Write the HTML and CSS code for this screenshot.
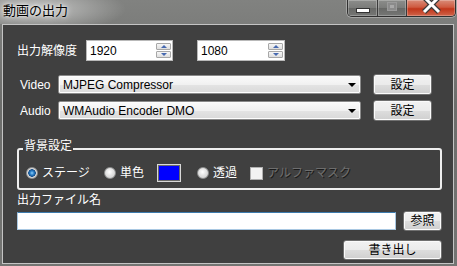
FILE: index.html
```html
<!DOCTYPE html>
<html lang="ja">
<head>
    <meta charset="UTF-8">
    <title>動画の出力</title>
    <link rel="stylesheet" href="styles.css">
</head>
<body>
    <div class="window">
        <div class="titlebar">
            <span class="title">動画の出力</span>
            <div class="caption-buttons">
                <span class="cap cap-min"><i></i></span>
                <span class="cap cap-max"><i></i></span>
                <span class="cap cap-close">
                    <svg width="21" height="14" viewBox="0 0 21 14">
                        <path d="M3 -3 L18 12 M18 -3 L3 12" stroke="#3a3a3a" stroke-width="5.5" fill="none"/>
                        <path d="M3 -3 L18 12 M18 -3 L3 12" stroke="#ffffff" stroke-width="3" fill="none"/>
                    </svg>
                </span>
            </div>
        </div>

        <div class="client">
            <div class="row res-row">
                <span class="res-label">出力解像度</span>
                <div class="spin">
                    <span>1920</span>
                    <span class="spin-btns"><span class="spin-up"></span><span class="spin-down"></span></span>
                </div>
                <div class="spin spin-height">
                    <span>1080</span>
                    <span class="spin-btns"><span class="spin-up"></span><span class="spin-down"></span></span>
                </div>
            </div>

            <div class="row codec-row">
                <span class="codec-label">Video</span>
                <div class="combo"><span>MJPEG Compressor</span><span class="combo-arrow"></span></div>
                <button class="btn btn-setting">設定</button>
            </div>
            <div class="row codec-row codec-audio">
                <span class="codec-label">Audio</span>
                <div class="combo"><span>WMAudio Encoder DMO</span><span class="combo-arrow"></span></div>
                <button class="btn btn-setting">設定</button>
            </div>

            <fieldset class="group">
                <legend>背景設定</legend>
                <div class="bg-options">
                    <span class="opt opt-stage"><span class="radio checked"></span>ステージ</span>
                    <span class="opt opt-mono"><span class="radio"></span>単色</span>
                    <span class="swatch"></span>
                    <span class="opt opt-trans"><span class="radio"></span>透過</span>
                    <span class="opt opt-alpha"><span class="check"></span><span class="disabled">アルファマスク</span></span>
                </div>
            </fieldset>

            <div class="file-label">出力ファイル名</div>
            <div class="row file-row">
                <div class="file-input"></div>
                <button class="btn btn-browse">参照</button>
            </div>
            <div class="row export-row">
                <button class="btn btn-export">書き出し</button>
            </div>
        </div>
    </div>
</body>
</html>
```

FILE: styles.css
```css
body {
    margin: 0;
    font-family: "Liberation Sans", "Noto Sans CJK JP", sans-serif;
    font-size: 12px;
    line-height: 14px;
}
.window {
    width: 457px;
    height: 266px;
    display: flex;
    flex-direction: column;
    overflow: hidden;
    background: linear-gradient(180deg, #818280 0%, #6c6d6b 40%, #747573 100%);
}
.titlebar {
    height: 24px;
    flex: none;
    display: flex;
    align-items: flex-start;
    background: radial-gradient(ellipse 90px 24px at 36px 9px, rgba(255,255,255,0.55), rgba(255,255,255,0) 100%);
}
.title {
    padding: 2px 0 0 3px;
    font-family: "Noto Sans CJK JP", sans-serif;
    font-size: 13px;
    line-height: 15px;
    color: #000;
    text-shadow: 0 0 6px #fff, 0 0 3px rgba(255,255,255,0.8);
}
.caption-buttons {
    margin-left: auto;
    margin-right: 1px;
    display: flex;
    height: 16px;
    border: 1px solid #303030;
    border-top: none;
    border-radius: 0 0 5px 5px;
    overflow: hidden;
    box-shadow: 0 0 0 1px rgba(255,255,255,0.3);
}
.cap {
    display: flex;
    align-items: center;
    justify-content: center;
    box-shadow: inset 0 0 0 1px rgba(255,255,255,0.25);
}
.cap-min,
.cap-max {
    background: linear-gradient(180deg, #8c8d8b 0%, #7a7b79 50%, #676866 51%, #767775 100%);
    border-right: 1px solid #3a3a3a;
}
.cap-min {
    width: 29px;
}
.cap-min i {
    width: 12px;
    height: 3px;
    margin-top: 5px;
    background: #fff;
    border: 1px solid #333;
}
.cap-max {
    width: 28px;
}
.cap-max i {
    width: 8px;
    height: 7px;
    margin-top: -3px;
    border: 1px solid #9a9a9a;
    background: #a9a9a9;
    box-shadow: inset 0 0 0 2px #8b8b8b;
}
.cap-close {
    width: 48px;
    align-items: flex-start;
    background: linear-gradient(180deg, #d98c79 0%, #cf5a40 45%, #c1361a 55%, #d0644a 100%);
}
.client {
    flex: 1;
    margin: 0 3px 2px 2px;
    padding: 15px 11px 0 14px;
    background: #404040;
    border: 1px solid #c4c4c4;
    color: #fff;
}
.row {
    display: flex;
    align-items: center;
}
.res-row {
    height: 21px;
}
.res-label {
    width: 69px;
}
.spin {
    box-sizing: border-box;
    width: 87px;
    height: 21px;
    padding: 0 1px 0 3px;
    display: flex;
    align-items: center;
    background: #fff;
    border: 1px solid #b9b9b9;
    color: #000;
}
.spin-height {
    width: 88px;
    margin-left: 24px;
}
.spin-btns {
    margin-left: auto;
    width: 15px;
    height: 15px;
    display: flex;
    flex-direction: column;
    gap: 1px;
}
.spin-up,
.spin-down {
    flex: 1;
    display: flex;
    align-items: center;
    justify-content: center;
    border: 1px solid #a7a7a7;
    border-radius: 1px;
    background: linear-gradient(180deg, #f6f6f6, #dedede);
}
.spin-up::after,
.spin-down::after {
    content: "";
    border-left: 3px solid transparent;
    border-right: 3px solid transparent;
}
.spin-up::after {
    border-bottom: 3px solid #4669b0;
}
.spin-down::after {
    border-top: 3px solid #4669b0;
}
.codec-row {
    height: 21px;
    margin-top: 13px;
}
.codec-audio {
    margin-top: 5px;
}
.codec-label {
    width: 38px;
    padding-left: 3px;
}
.combo {
    box-sizing: border-box;
    width: 303px;
    height: 19px;
    padding: 0 4px;
    display: flex;
    align-items: center;
    border: 1px solid #8a8a8a;
    border-radius: 2px;
    background: linear-gradient(180deg, #fbfbfb 0%, #f1f1f1 50%, #e4e4e4 51%, #d9d9d9 100%);
    box-shadow: inset 0 0 0 1px #fdfdfd;
    color: #000;
}
.combo-arrow {
    margin-left: auto;
    border-left: 4px solid transparent;
    border-right: 4px solid transparent;
    border-top: 4px solid #000;
}
.btn {
    box-sizing: border-box;
    padding: 0;
    border: 1px solid #707070;
    border-radius: 3px;
    background: linear-gradient(180deg, #f2f2f2 0%, #ebebeb 50%, #dddddd 51%, #cfcfcf 100%);
    box-shadow: inset 0 0 0 1px #fbfbfb;
    font: inherit;
    color: #000;
}
.btn-setting {
    width: 59px;
    height: 21px;
    margin-left: 12px;
}
.group {
    box-sizing: border-box;
    width: 425px;
    margin: 20px 0 0;
    padding: 7px 0 6px 7px;
    border: 2px solid #eeeeee;
    border-radius: 3px;
}
.group legend {
    margin-left: -3px;
    padding: 0 1px 6px;
    line-height: 10px;
}
.bg-options {
    height: 18px;
    display: flex;
    align-items: center;
}
.opt {
    display: flex;
    align-items: center;
}
.opt-stage {
    width: 78px;
}
.opt-mono {
    width: 53px;
}
.opt-trans {
    width: 53px;
}
.radio {
    box-sizing: border-box;
    width: 12px;
    height: 12px;
    margin-right: 4px;
    border-radius: 50%;
    border: 1px solid #8e8f8f;
    background: radial-gradient(circle at 45% 40%, #ffffff 0, #e2e2e2 45%, #c6c6c6 100%);
}
.radio.checked {
    background: radial-gradient(circle, #8fd0fa 0, #2a7fc8 2px, #144f8c 3.5px, #d6d6d6 4px, #f2f2f2 100%);
}
.swatch {
    box-sizing: border-box;
    width: 24px;
    height: 18px;
    margin-right: 16px;
    background: #0000ff;
    border: 1px solid #d8d8d8;
    box-shadow: inset 0 0 0 1px #6a6a6a;
}
.check {
    box-sizing: border-box;
    width: 13px;
    height: 13px;
    margin-right: 4px;
    border: 1px solid #b1b1b1;
    background: #f2f2f2;
}
.disabled {
    color: #6e6e6e;
    text-shadow: 1px 1px 0 #1a1a1a;
}
.file-label {
    margin-top: 3px;
}
.file-row {
    height: 20px;
    margin-top: 4px;
}
.file-input {
    box-sizing: border-box;
    width: 379px;
    height: 18px;
    background: #fff;
    border: 1px solid #a9c8e2;
    border-top-color: #3d7bad;
}
.btn-browse {
    width: 39px;
    height: 20px;
    margin-left: 7px;
}
.export-row {
    justify-content: flex-end;
    margin-top: 9px;
}
.btn-export {
    width: 99px;
    height: 20px;
}
```
